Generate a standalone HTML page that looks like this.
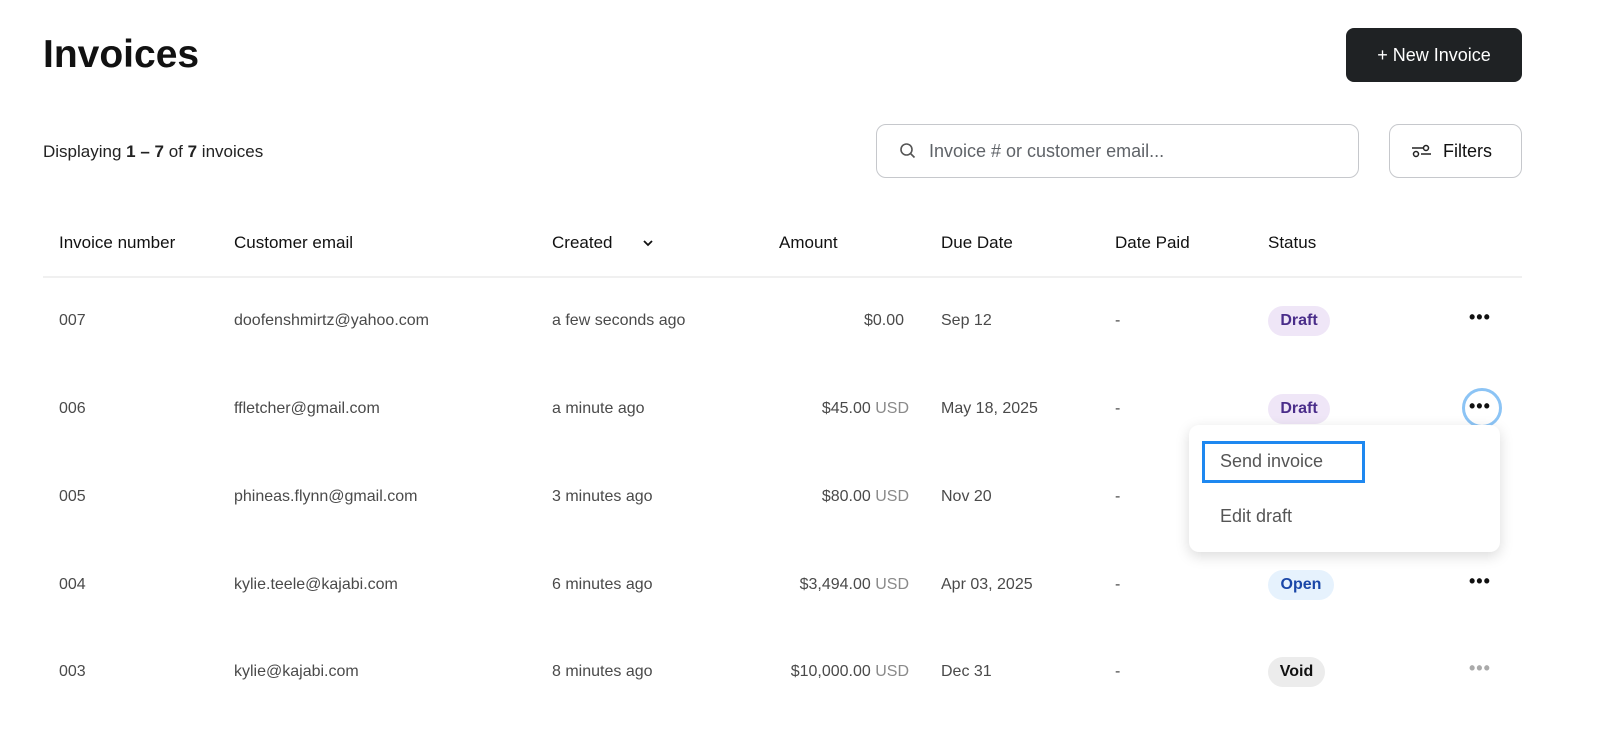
<!DOCTYPE html>
<html><head><meta charset="utf-8"><style>
*{margin:0;padding:0;box-sizing:border-box}
body{width:1600px;height:736px;background:#fff;font-family:"Liberation Sans",sans-serif;color:#202124;position:relative;overflow:hidden}
.a{position:absolute;white-space:nowrap}
.h{font-size:17px;font-weight:500;color:#111;top:233px}
.c{font-size:16px;color:#4a4a4a}
.u{color:#8a8a8a}
.b{position:absolute;height:30px;border-radius:15px;font-size:16px;font-weight:bold;line-height:30px;text-align:center}
.dots{position:absolute;font-size:18px;font-weight:bold;letter-spacing:1px;color:#111}
</style></head><body>
<div class="a" style="left:43px;top:33px;font-size:39px;font-weight:bold;color:#111">Invoices</div>
<div class="a" style="left:1346px;top:28px;width:176px;height:54px;background:#1f2224;border-radius:8px;color:#fff;font-size:18px;line-height:54px;text-align:center">+ New Invoice</div>
<div class="a" style="left:43px;top:142px;font-size:17px;color:#222">Displaying <b>1 – 7</b> of <b>7</b> invoices</div>
<div class="a" style="left:876px;top:124px;width:483px;height:54px;border:1px solid #c6c8cc;border-radius:10px"></div>
<svg class="a" style="left:899px;top:142px" width="18" height="18" viewBox="0 0 18 18"><circle cx="7.5" cy="7.5" r="5.5" fill="none" stroke="#555" stroke-width="1.6"/><line x1="11.5" y1="11.5" x2="15.5" y2="15.5" stroke="#555" stroke-width="1.6"/></svg>
<div class="a" style="left:929px;top:141px;font-size:18px;color:#5f6368">Invoice # or customer email...</div>
<div class="a" style="left:1389px;top:124px;width:133px;height:54px;border:1px solid #c6c8cc;border-radius:10px"></div>
<svg class="a" style="left:1411px;top:143px" width="22" height="16" viewBox="0 0 22 16"><line x1="1" y1="5" x2="12" y2="5" stroke="#222" stroke-width="1.5"/><circle cx="15" cy="5" r="2.5" fill="none" stroke="#222" stroke-width="1.5"/><line x1="10" y1="11" x2="20" y2="11" stroke="#222" stroke-width="1.5"/><circle cx="5" cy="11" r="2.5" fill="none" stroke="#222" stroke-width="1.5"/></svg>
<div class="a" style="left:1443px;top:141px;font-size:18px;font-weight:500;color:#111">Filters</div>

<div class="a h" style="left:59px">Invoice number</div>
<div class="a h" style="left:234px">Customer email</div>
<div class="a h" style="left:552px">Created</div>
<svg class="a" style="left:642px;top:239px" width="12" height="8" viewBox="0 0 12 8"><path d="M2 2l4 4 4-4" fill="none" stroke="#111" stroke-width="1.8"/></svg>
<div class="a h" style="left:779px">Amount</div>
<div class="a h" style="left:941px">Due Date</div>
<div class="a h" style="left:1115px">Date Paid</div>
<div class="a h" style="left:1268px">Status</div>
<div class="a" style="left:43px;top:276px;width:1479px;height:2px;background:#f0f0f0"></div>

<div class="a c" style="left:59px;top:312px">007</div><div class="a c" style="left:234px;top:312px">doofenshmirtz@yahoo.com</div><div class="a c" style="left:552px;top:312px">a few seconds ago</div><div class="a c" style="right:696px;top:312px">$0.00</div><div class="a c" style="left:941px;top:312px">Sep 12</div><div class="a c" style="left:1115px;top:312px">-</div>
<div class="b" style="left:1268px;top:306px;width:62px;background:#efe6f7;color:#4a2d8a">Draft</div><div class="dots" style="left:1469px;top:307px">•••</div>

<div class="a c" style="left:59px;top:400px">006</div><div class="a c" style="left:234px;top:400px">ffletcher@gmail.com</div><div class="a c" style="left:552px;top:400px">a minute ago</div><div class="a c" style="right:691px;top:400px">$45.00 <span class="u">USD</span></div><div class="a c" style="left:941px;top:400px">May 18, 2025</div><div class="a c" style="left:1115px;top:400px">-</div>
<div class="b" style="left:1268px;top:394px;width:62px;background:#efe6f7;color:#4a2d8a">Draft</div>
<div class="a" style="left:1462px;top:388px;width:40px;height:40px;border:3px solid #8cc4f5;border-radius:50%"></div><div class="dots" style="left:1469px;top:396px">•••</div>

<div class="a c" style="left:59px;top:488px">005</div><div class="a c" style="left:234px;top:488px">phineas.flynn@gmail.com</div><div class="a c" style="left:552px;top:488px">3 minutes ago</div><div class="a c" style="right:691px;top:488px">$80.00 <span class="u">USD</span></div><div class="a c" style="left:941px;top:488px">Nov 20</div><div class="a c" style="left:1115px;top:488px">-</div>

<div class="a c" style="left:59px;top:576px">004</div><div class="a c" style="left:234px;top:576px">kylie.teele@kajabi.com</div><div class="a c" style="left:552px;top:576px">6 minutes ago</div><div class="a c" style="right:691px;top:576px">$3,494.00 <span class="u">USD</span></div><div class="a c" style="left:941px;top:576px">Apr 03, 2025</div><div class="a c" style="left:1115px;top:576px">-</div>
<div class="b" style="left:1268px;top:570px;width:66px;background:#e6f2fd;color:#1a47a8">Open</div><div class="dots" style="left:1469px;top:571px">•••</div>

<div class="a c" style="left:59px;top:663px">003</div><div class="a c" style="left:234px;top:663px">kylie@kajabi.com</div><div class="a c" style="left:552px;top:663px">8 minutes ago</div><div class="a c" style="right:691px;top:663px">$10,000.00 <span class="u">USD</span></div><div class="a c" style="left:941px;top:663px">Dec 31</div><div class="a c" style="left:1115px;top:663px">-</div>
<div class="b" style="left:1268px;top:657px;width:57px;background:#ececec;color:#111">Void</div><div class="dots" style="left:1469px;top:658px;color:#aaa">•••</div>

<div class="a" style="left:1189px;top:425px;width:311px;height:127px;background:#fff;border-radius:10px;box-shadow:0 4px 14px rgba(0,0,0,.15)"></div>
<div class="a" style="left:1202px;top:441px;width:163px;height:42px;border:3px solid #1e88f0"></div>
<div class="a" style="left:1220px;top:451px;font-size:18px;color:#555">Send invoice</div>
<div class="a" style="left:1220px;top:506px;font-size:18px;color:#555">Edit draft</div>
</body></html>
